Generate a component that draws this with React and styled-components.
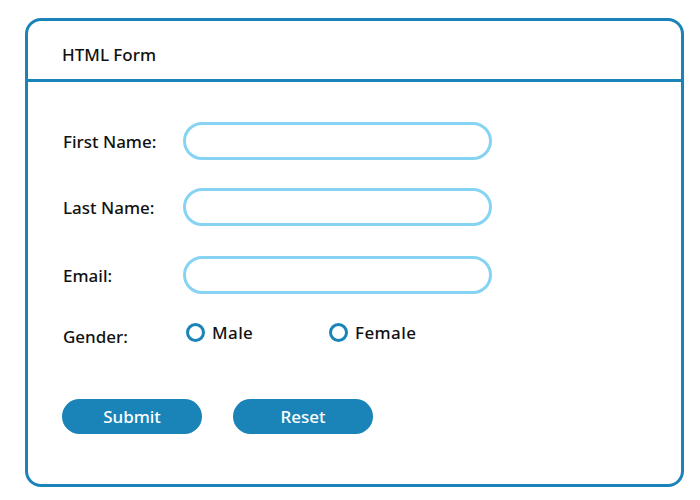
import styled, { createGlobalStyle } from 'styled-components'

const GlobalStyle = createGlobalStyle`
    body {
        margin: 0;
        background: #ffffff;
        font-family: 'Noto Sans', 'Lato', sans-serif;
        color: #111111;
    }
`

const blue = '#1a84b8'
const lightBlue = '#87d3f3'

const Card = styled('div')`
    box-sizing: border-box;
    width: 659px;
    height: 469px;
    margin: 18px 0 0 25px;
    border: 3px solid ${blue};
    border-radius: 16px;
    display: flex;
    flex-direction: column;
`

const Header = styled('div')`
    box-sizing: border-box;
    height: 61px;
    padding: 8px 0 0 34px;
    display: flex;
    align-items: center;
    font-size: 17px;
    font-weight: 500;
    border-bottom: 3px solid ${blue};
`

const Body = styled('form')`
    padding: 40px 0 0 35px;
    display: flex;
    flex-direction: column;
`

const Row = styled('div')`
    display: flex;
    align-items: center;
    height: ${(p) => p.$height || 38}px;
    margin-bottom: ${(p) => p.$gap || 0}px;
`

const Label = styled('label')`
    width: 120px;
    font-size: 17px;
    font-weight: 500;
    padding-top: ${(p) => p.$drop || 0}px;
`

const Input = styled('input')`
    box-sizing: border-box;
    width: 309px;
    height: 38px;
    border: 3px solid ${lightBlue};
    border-radius: 19px;
    outline: none;
    padding: 0 16px;
    font-family: inherit;
    font-size: 15px;
`

const Options = styled('div')`
    display: flex;
    margin-left: 3px;
    padding-bottom: 3px;
`

const Option = styled('label')`
    width: 143px;
    display: flex;
    align-items: center;
    gap: 7px;
    font-size: 17px;
    font-weight: 500;
    letter-spacing: 0.4px;
`

const Radio = styled('span')`
    box-sizing: border-box;
    width: 19px;
    height: 19px;
    border-radius: 50%;
    border: 3px solid ${blue};
`

const Buttons = styled('div')`
    display: flex;
    gap: 31px;
    margin-left: -1px;
`

const Button = styled('button')`
    width: 140px;
    height: 35px;
    border: none;
    border-radius: 18px;
    background: ${blue};
    color: #ffffff;
    font-family: inherit;
    font-size: 17px;
    font-weight: 500;
`

const fields = [
    { id: 'first', label: 'First Name:', gap: 28 },
    { id: 'last', label: 'Last Name:', gap: 30 },
    { id: 'email', label: 'Email:', gap: 29 },
]

export default function App() {
    return (
        <>
            <GlobalStyle />
            <Card>
                <Header>HTML Form</Header>
                <Body onSubmit={(e) => e.preventDefault()}>
                    {fields.map((f) => (
                        <Row key={f.id} $gap={f.gap}>
                            <Label htmlFor={f.id}>{f.label}</Label>
                            <Input id={f.id} type="text" />
                        </Row>
                    ))}
                    <Row $height={22} $gap={54}>
                        <Label $drop={5}>Gender:</Label>
                        <Options>
                            <Option>
                                <Radio />
                                Male
                            </Option>
                            <Option>
                                <Radio />
                                Female
                            </Option>
                        </Options>
                    </Row>
                    <Buttons>
                        <Button type="submit">Submit</Button>
                        <Button type="reset">Reset</Button>
                    </Buttons>
                </Body>
            </Card>
        </>
    )
}
